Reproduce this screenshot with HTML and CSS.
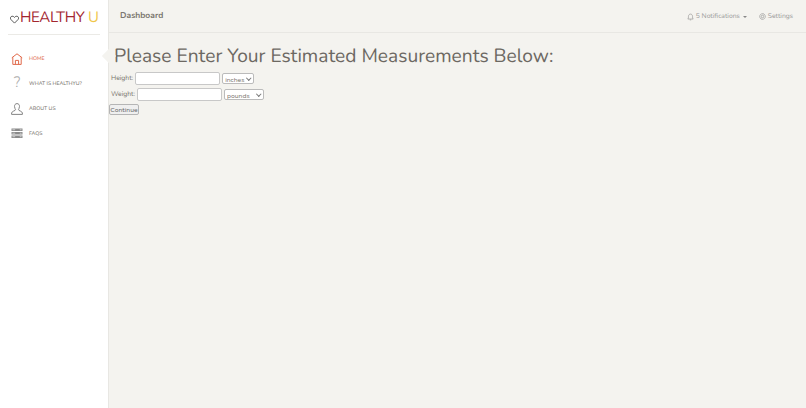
FILE: index.html
```html
<!DOCTYPE html>
<html lang="en">
<head>
<meta charset="utf-8">
<title>Healthy U</title>
<link rel="stylesheet" href="styles.css">
</head>
<body>
<div class="app">
  <aside class="sidebar">
    <div class="logo">
      <svg class="heart" viewBox="0 0 12 12" width="9" height="9"><path d="M6 10.800 1.400 6.200C.2 5 .3 3 1.600 2.100 2.900 1.200 4.800 1.600 6 3.200 7.200 1.600 9.100 1.200 10.400 2.100 11.700 3 11.800 5 10.600 6.200Z" fill="none" stroke="#555" stroke-width="1.300"/></svg>
      <span class="brand">HEALTHY <span class="brand-u">U</span></span>
    </div>
    <nav class="nav">
      <a class="nav-item active">
        <svg class="nav-icon" viewBox="0 0 12 12" width="12" height="12"><path d="M.8 4.800 6 .8 11.200 4.800M1.800 4.200V11.400H10.200V4.200M4.400 11.400V7.400H7.600V11.400" fill="none" stroke="#e0694a" stroke-width="1"/></svg>
        <span>HOME</span>
      </a>
      <a class="nav-item">
        <span class="nav-icon question">?</span>
        <span>WHAT IS HEALTHYU?</span>
      </a>
      <a class="nav-item">
        <svg class="nav-icon" viewBox="0 0 12 12" width="12" height="12"><path d="M6 .6C4.300.6 3.500 1.900 3.500 3.400 3.500 5 4.400 6 4.500 6.800 4.600 7.800 .9 8 .6 10V11.400H11.400V10C11.100 8 7.400 7.800 7.500 6.800 7.600 6 8.500 5 8.500 3.400 8.500 1.900 7.700.6 6 .6Z" fill="none" stroke="#777" stroke-width=".9"/></svg>
        <span>ABOUT US</span>
      </a>
      <a class="nav-item">
        <svg class="nav-icon" viewBox="0 0 12 12" width="12" height="11"><path d="M0 .5H12V3.300H0ZM0 4.300H12V7.100H0ZM0 8.100H12V11H0Z" fill="#8a8a8a"/><path d="M1 1.900H4M1 5.700H4M1 9.500H4M9 1.900H11M9 5.700H11M9 9.500H11" stroke="#eee" stroke-width=".7"/></svg>
        <span>FAQS</span>
      </a>
    </nav>
  </aside>
  <main class="main">
    <header class="topbar">
      <span class="title">Dashboard</span>
      <div class="top-links">
        <span class="top-link">
          <svg viewBox="0 0 12 12" width="7" height="8"><path d="M1.500 9.500C2.500 8.500 2.500 7 2.500 5 2.500 2.800 4 1 6 1S9.500 2.800 9.500 5C9.500 7 9.500 8.500 10.500 9.500ZM4.800 11H7.200" fill="none" stroke="#888" stroke-width="1"/></svg>
          5 Notifications <span class="caret"></span>
        </span>
        <span class="top-link">
          <svg viewBox="0 0 12 12" width="7" height="7"><circle cx="6" cy="6" r="4.800" fill="none" stroke="#888" stroke-width="1.400" stroke-dasharray="1.500 .6"/><circle cx="6" cy="6" r="2.200" fill="none" stroke="#888" stroke-width="1"/></svg>
          Settings
        </span>
      </div>
    </header>
    <section class="content">
      <span class="notch"></span>
      <h1>Please Enter Your Estimated Measurements Below:</h1>
      <form class="form">
        <div class="row">
          <label>Height:</label>
          <input class="field" type="text">
          <span class="select-wrap"><select class="unit"><option>inches</option></select></span>
        </div>
        <div class="row">
          <label>Weight:</label>
          <input class="field" type="text">
          <span class="select-wrap"><select class="unit unit-wide"><option>pounds</option></select></span>
        </div>
        <button class="continue" type="button">Continue</button>
      </form>
    </section>
  </main>
</div>
</body>
</html>
```
FILE: styles.css
```css
* { box-sizing: border-box; }
html, body { margin: 0; height: 100%; }
body {
  font-family: "Nunito", "Lato", "Noto Sans", sans-serif;
  color: #66615b;
  background: #f4f3ef;
  text-rendering: geometricPrecision;
}
.app { display: flex; min-height: 408px; }
.sidebar {
  width: 109px;
  flex: none;
  background: #fff;
  border-right: 1px solid #e8e7e3;
}
.logo {
  margin: 0 8px;
  height: 35px;
  padding: 1px 0 0 2px;
  display: flex;
  align-items: center;
  border-bottom: 1px solid #ebeae6;
}
.heart { flex: none; margin: 3px 1px 0 0; }
.brand { font-size: 15px; font-weight: 400; letter-spacing: -.3px; color: #a3262f; white-space: nowrap; }
.brand-u { color: #f0c649; }
.nav { display: flex; flex-direction: column; padding-top: 11px; }
.nav-item {
  height: 25px;
  padding-left: 11px;
  display: flex;
  align-items: center;
  gap: 6px;
  font-size: 5.200px;
  font-weight: 500;
  color: #77736c;
}
.nav-item.active { color: #e0694a; }
.nav-icon { width: 12px; flex: none; }
.question { font-size: 15px; font-weight: 300; color: #aaa; text-align: center; line-height: 1; }
.main { flex: 1; min-width: 0; }
.topbar {
  height: 32px;
  margin-top: 1px;
  padding: 0 13px 1px 11px;
  display: flex;
  align-items: center;
  justify-content: space-between;
  border-bottom: 1px solid #e8e7e3;
}
.title { font-size: 8.500px; font-weight: 700; color: #7b7770; }
.top-links { display: flex; gap: 12px; margin-top: 1px; }
.top-link { font-size: 6.800px; color: #9a9a9a; display: flex; align-items: center; gap: 2px; }
.caret {
  width: 0;
  height: 0;
  margin-left: 1px;
  border-top: 2px solid #888;
  border-left: 2px solid transparent;
  border-right: 2px solid transparent;
}
.content { position: relative; padding: 10px 0 0; }
.notch {
  position: absolute;
  left: -7px;
  top: 16px;
  width: 14px;
  height: 14px;
  background: #f4f3ef;
  transform: rotate(45deg) scale(.72);
}
h1 {
  margin: 0 0 2px 5px;
  font-size: 19.200px;
  font-weight: 400;
  line-height: 27px;
  color: #6c6862;
}
.form { font-size: 6.800px; }
.row { display: flex; align-items: center; gap: 2px; margin: 0 0 3px 2px; height: 13px; }
.row label { color: #77736c; }
.field { width: 85px; height: 13px; padding: 0; background: #fff; border: 1px solid #c8c8c8; border-radius: 2px; }
.select-wrap { position: relative; display: block; height: 11px; }
.select-wrap::after {
  content: "";
  position: absolute;
  right: 4px;
  top: 3px;
  width: 2.500px;
  height: 2.500px;
  border-right: 1px solid #777;
  border-bottom: 1px solid #777;
  transform: rotate(45deg);
}
.unit {
  display: block;
  appearance: none;
  -webkit-appearance: none;
  height: 11px;
  width: 32px;
  font: inherit;
  font-size: 6.800px;
  padding: 1px 0 0 2px;
  background: #fff;
  border: 1px solid #bbb;
  border-radius: 2px;
  color: #77736c;
}
.unit-wide { width: 40px; }
.continue {
  display: block;
  height: 11px;
  width: 30px;
  margin-top: 3px;
  padding: 0;
  font: inherit;
  font-size: 6.800px;
  color: #666;
  background: #efefef;
  border: 1px solid #b5b5b5;
  border-radius: 2px;
}
```
